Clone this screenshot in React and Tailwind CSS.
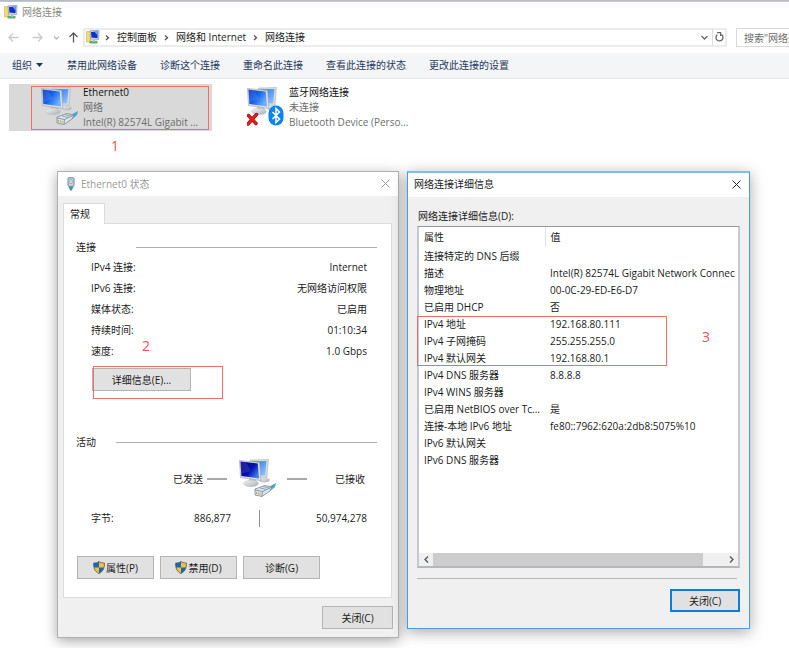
import React from "react";

function Monitors({ dark }) {
  const front = dark ? "url(#screenDark)" : "url(#screenBlue)";
  return (
    <g>
      <defs>
        <linearGradient id="screenBlue" x1="0" y1="0" x2="1" y2="0.6">
          <stop offset="0" stopColor="#0a35b4" />
          <stop offset="0.5" stopColor="#1560ee" />
          <stop offset="1" stopColor="#6fb0ff" />
        </linearGradient>
        <linearGradient id="screenDark" x1="0" y1="0" x2="1" y2="0.7">
          <stop offset="0" stopColor="#05057c" />
          <stop offset="0.6" stopColor="#0610b0" />
          <stop offset="1" stopColor="#3f7df0" />
        </linearGradient>
        <linearGradient id="screenBack" x1="0" y1="0" x2="1" y2="1">
          <stop offset="0" stopColor="#1c6be8" />
          <stop offset="1" stopColor="#9bcaff" />
        </linearGradient>
        <linearGradient id="stand" x1="0" y1="0" x2="1" y2="1">
          <stop offset="0" stopColor="#f4f4f4" />
          <stop offset="1" stopColor="#a9adb2" />
        </linearGradient>
      </defs>
      <ellipse cx="25" cy="21" rx="6" ry="2.5" fill="url(#stand)" />
      <path d="M11 1 L29.500 0.500 L28 18.500 L15 18 Z" fill="#d7dbe0" stroke="#a4aab2" strokeWidth="0.500" />
      <path d="M13 2.500 L27.500 2 L26.200 16.500 L15 16 Z" fill="url(#screenBack)" />
      <path d="M10 18 L17 19 L18 24 L10 24 Z" fill="#c2c6ca" />
      <ellipse cx="12" cy="24.500" rx="7.500" ry="3.200" fill="url(#stand)" stroke="#b4b8bc" strokeWidth="0.400" />
      <path d="M0.500 1.500 L20.500 3.500 L22 21.500 L1.500 18.500 Z" fill="#dfe3e7" stroke="#9aa1aa" strokeWidth="0.600" />
      <path d="M1.500 2.600 L18.800 4.400 L20 19.500 L2.400 17 Z" fill={front} />
      <path d="M1.500 2.600 L7 3.200 L12 12 L2.300 15 Z" fill="#fff" opacity="0.100" />
    </g>
  );
}

function Plug() {
  return (
    <g>
      <path d="M28 29 L37 24 L36 28 L31 32 Z" fill="#48a5d0" />
      <path d="M16 30 L26 26.500 L33 28 L31 32 L23 37.500 L16 36 Z" fill="#dce5eb" stroke="#71899b" strokeWidth="0.800" />
      <path d="M16 31 L23.500 32.500 L33 28 M23.500 32.500 L23 37" fill="none" stroke="#71899b" strokeWidth="0.800" />
      <path d="M21 29 L28 30.500 M24 27.600 L31 29.200" stroke="#8fa6b6" strokeWidth="1" />
      <path d="M17.500 33 v2 M19.300 33.400 v2 M21.100 33.800 v2" stroke="#c79d36" strokeWidth="0.900" />
    </g>
  );
}

function EthernetIcon({ dark }) {
  return (
    <svg className="h-10 w-[38px] shrink-0" viewBox="0 0 38 40" aria-hidden="true">
      <Monitors dark={dark} />
      <Plug />
    </svg>
  );
}

function BluetoothIcon() {
  return (
    <svg className="h-10 w-[38px] shrink-0" viewBox="0 0 38 40" aria-hidden="true">
      <Monitors />
      <path d="M1.500 28.500 L9 36.500 M9.500 27.500 L1 37" stroke="#8e0b0b" strokeWidth="3.400" strokeLinecap="round" />
      <path d="M1.500 28.500 L9 36.500 M9.500 27.500 L1 37" stroke="#e61e1e" strokeWidth="2.300" strokeLinecap="round" />
      <rect x="21.500" y="18.500" width="15" height="20" rx="7.500" fill="#0a84f5" />
      <path d="M25.500 25 L32.500 32 L29 35.500 V21.500 L32.500 25 L25.500 32" fill="none" stroke="#fff" strokeWidth="1.500" />
    </svg>
  );
}

function FolderIcon() {
  return (
    <svg className="h-[14px] w-[14px] shrink-0" viewBox="0 0 14 14" aria-hidden="true">
      <path d="M0.500 1.500 H5 V12 H0.500 Z" fill="#f2dc6e" stroke="#cdb548" strokeWidth="0.600" />
      <path d="M4 0.800 L13 0.400 L12.600 9.500 L4.500 9 Z" fill="#d3dfec" stroke="#7f93aa" strokeWidth="0.700" />
      <path d="M5 2 L11.800 1.600 L11.500 8.200 L5.400 7.600 Z" fill="#1330c4" />
      <path d="M8.500 1.800 L11.800 1.600 L11.600 5.500 Z" fill="#6aa8f4" />
      <path d="M3.500 10.800 H11.500 V13.500 H3.500 Z" fill="#5fae70" />
      <path d="M7 9.500 H9 V12 H7 Z" fill="#a9bccb" />
    </svg>
  );
}

function AdapterIcon() {
  return (
    <svg className="h-[14px] w-[8px] shrink-0" viewBox="0 0 8 14" aria-hidden="true">
      <rect x="1" y="0.700" width="6" height="8.600" rx="0.800" fill="#c9d5df" stroke="#71869a" />
      <path d="M3 2.500 h2 v4 h-2 z" fill="#f5f8fa" stroke="#8497a8" strokeWidth="0.700" />
      <path d="M1.800 9.500 H6.200 V11 L5.200 12 V13.500 H2.800 V12 L1.800 11 Z" fill="#3b93bd" />
    </svg>
  );
}

function Shield() {
  return (
    <svg className="h-[13px] w-3 shrink-0" viewBox="0 0 12 13" aria-hidden="true">
      <path d="M6 0.500 C4.500 1.700 2.500 2 0.600 2 C0.500 7.500 2 10.500 6 12.500 C10 10.500 11.500 7.500 11.400 2 C9.500 2 7.500 1.700 6 0.500 Z" fill="#1568c0" />
      <path d="M6 0.500 C7.500 1.700 9.500 2 11.400 2 C11.450 3.800 11.300 5.200 11 6.400 H6 Z" fill="#fbc02e" />
      <path d="M6 6.400 H1 C1.600 9.300 3.200 11.200 6 12.500 Z" fill="#fbc02e" />
      <path d="M6 0.500 C4.500 1.700 2.500 2 0.600 2 C0.500 7.500 2 10.500 6 12.500 C10 10.500 11.500 7.500 11.400 2 C9.500 2 7.500 1.700 6 0.500 Z" fill="none" stroke="#4c5560" strokeWidth="0.700" />
    </svg>
  );
}

function Cross() {
  return (
    <svg className="h-[9px] w-[9px]" viewBox="0 0 9 9" aria-hidden="true">
      <path d="M0.500 0.500 L8.500 8.500 M8.500 0.500 L0.500 8.500" stroke="currentColor" strokeWidth="1" fill="none" />
    </svg>
  );
}

function Chevron({ d = "M2 1.500 L4.500 3.700 L2 6", className = "text-[#555]" }) {
  return (
    <svg className={`h-[7px] w-[7px] shrink-0 ${className}`} viewBox="0 0 7 7" aria-hidden="true">
      <path d={d} stroke="currentColor" strokeWidth="1.300" fill="none" />
    </svg>
  );
}

function Arrow({ d, className }) {
  return (
    <svg className={`h-[11px] w-[11px] ${className}`} viewBox="0 0 11 11" aria-hidden="true">
      <path d={d} stroke="currentColor" fill="none" strokeWidth="1.300" />
    </svg>
  );
}

const buttonBase = "flex items-center justify-center bg-[#e1e1e1]";
const pushButton = `${buttonBase} h-[23px] border border-[#b4b4b4]`;

function AddressBar() {
  return (
    <div className="flex h-[31px] items-center text-[#1a1a1a]">
      <nav className="flex w-[83px] shrink-0 items-center pl-2" aria-label="导航">
        <button aria-label="后退"><Arrow className="text-[#cacaca]" d="M10.500 5.500 H1 M5 1.500 L1 5.500 L5 9.500" /></button>
        <button className="ml-[13px]" aria-label="前进"><Arrow className="text-[#cacaca]" d="M0.500 5.500 H10 M6 1.500 L10 5.500 L6 9.500" /></button>
        <button className="ml-[10px]" aria-label="最近"><Chevron className="text-[#b8b8b8]" d="M1 2.500 L3.500 5 L6 2.500" /></button>
        <button className="ml-2" aria-label="向上"><Arrow className="text-[#5a5a5a]" d="M5.500 10.500 V1 M1.500 5 L5.500 1 L9.500 5" /></button>
      </nav>
      <div className="flex h-[19px] min-w-0 flex-1 items-center border-2 border-[#ececec] pb-px pl-px">
        <FolderIcon />
        <span className="ml-1 flex"><Chevron /></span>
        <a href="#panel" className="ml-[6px]">控制面板</a>
        <span className="mx-[6px] flex"><Chevron /></span>
        <a href="#network">网络和 Internet</a>
        <span className="mx-[6px] flex"><Chevron /></span>
        <a href="#connections">网络连接</a>
        <button className="ml-auto flex w-4 justify-center" aria-label="展开"><Chevron className="text-[#666]" d="M0.500 2 L3.500 5 L6.500 2" /></button>
        <button className="flex h-4 w-[13px] items-center justify-center border-l border-[#dcdcdc]" aria-label="刷新">
          <svg className="h-[10px] w-[9px]" viewBox="0 0 9 10" aria-hidden="true">
            <path d="M6.500 2.600 A3.500 3.500 0 1 1 2.300 2.700 M2 0.700 H5.600 V4" fill="none" stroke="#666" strokeWidth="1.300" />
          </svg>
        </button>
      </div>
      <input
        type="text"
        aria-label="搜索"
        placeholder={'搜索"网络连接"'}
        className="ml-[9px] h-[19px] w-[53px] shrink-0 border border-r-0 border-[#d9d9d9] pl-[7px] outline-none placeholder:text-[#6d6d6d]"
      />
    </div>
  );
}

function Toolbar() {
  const actions = ["禁用此网络设备", "诊断这个连接", "重命名此连接", "查看此连接的状态", "更改此连接的设置"];
  return (
    <div className="flex h-[26px] items-center border-b border-[#e3e6ea] bg-[#f4f5f7] pb-px pl-3 text-[#1e395b]">
      <button className="mr-6 flex items-center gap-1">
        组织
        <svg className="h-1 w-[7px]" viewBox="0 0 7 4" aria-hidden="true"><path d="M0 0 H7 L3.500 4 Z" fill="currentColor" /></svg>
      </button>
      <div className="flex gap-[23px]">
        {actions.map((a) => <button key={a}>{a}</button>)}
      </div>
    </div>
  );
}

function Adapter({ icon, name, state, device }) {
  return (
    <div className="flex gap-1 pl-8 leading-[15px] text-[#6d6d6d]">
      <div className="pt-[3px]">{icon}</div>
      <div className="pt-px whitespace-nowrap">
        <div className="text-[#111]">{name}</div>
        <div>{state}</div>
        <div>{device}</div>
      </div>
    </div>
  );
}

function SectionTitle({ children, lineClass }) {
  return (
    <div className="flex items-center">
      <h2>{children}</h2>
      <div className={`h-px flex-1 bg-[#adadad] ${lineClass}`} />
    </div>
  );
}

function StatusWindow() {
  const rows = [
    ["IPv4 连接:", "Internet"],
    ["IPv6 连接:", "无网络访问权限"],
    ["媒体状态:", "已启用"],
    ["持续时间:", "01:10:34"],
    ["速度:", "1.0 Gbps"],
  ];
  return (
    <section className="w-[342px] shrink-0 border border-[#b0b0b0] bg-[#f0f0f0] shadow-[0_3px_12px_rgba(0,0,0,0.35)]">
      <header className="flex h-6 items-center bg-white pr-2 pb-px pl-[9px] text-[#9a9a9a]">
        <AdapterIcon />
        <h1 className="ml-[6px]">Ethernet0 状态</h1>
        <button className="ml-auto" aria-label="关闭窗口"><Cross /></button>
      </header>
      <div className="pt-[7px] pr-[5px] pb-2 pl-[5px]">
        <div role="tablist">
          <button role="tab" aria-selected="true" className="relative z-10 -mb-px block h-[21px] w-[42px] border border-b-0 border-[#dcdcdc] bg-white pr-2 pb-px text-center">常规</button>
        </div>
        <div className="mr-px border border-[#dcdcdc] bg-white pt-4 pr-[14px] pb-[18px] pl-3">
          <SectionTitle lineClass="ml-10">连接</SectionTitle>
          <dl className="mt-[2px] pr-[10px] pl-[15px]">
            {rows.map(([k, v]) => (
              <div key={k} className="flex h-[21px] items-center justify-between">
                <dt>{k}</dt>
                <dd>{v}</dd>
              </div>
            ))}
          </dl>
          <div className="relative mt-[7px] ml-4">
            <button className={`${pushButton} w-[99px]`}>详细信息(E)...</button>
            <div className="pointer-events-none absolute -top-[2px] left-px h-[33px] w-[130px] border border-[#f56c6c]" />
            <span className="absolute -top-[30px] left-[50px] text-[14px] leading-4 text-[#f55050]">2</span>
          </div>
          <div className="mt-11">
            <SectionTitle lineClass="ml-5">活动</SectionTitle>
          </div>
          <div className="mt-[10px] flex h-10 items-center pr-3 pl-[97px]">
            <span>已发送</span>
            <span className="mr-3 ml-1 h-[2px] w-5 bg-[#a8a8a8]" />
            <EthernetIcon dark />
            <span className="ml-[10px] h-[2px] w-5 bg-[#a8a8a8]" />
            <span className="ml-auto">已接收</span>
          </div>
          <div className="mt-[10px] flex h-[18px] items-center pr-[10px] pl-[15px]">
            <span>字节:</span>
            <span className="ml-auto">886,877</span>
            <span className="ml-7 h-[17px] w-px bg-[#8f8f8f]" />
            <span className="w-[107px] text-right">50,974,278</span>
          </div>
          <div className="mt-[29px] ml-px flex gap-[6px]">
            <button className={`${pushButton} w-[77px] gap-px`}><Shield />属性(P)</button>
            <button className={`${pushButton} w-[77px] gap-px`}><Shield />禁用(D)</button>
            <button className={`${pushButton} w-[77px]`}>诊断(G)</button>
          </div>
        </div>
        <button className={`${pushButton} mt-2 ml-auto w-[71px]`}>关闭(C)</button>
      </div>
    </section>
  );
}

function DetailsWindow() {
  const rows = [
    ["连接特定的 DNS 后缀", ""],
    ["描述", "Intel(R) 82574L Gigabit Network Connec"],
    ["物理地址", "00-0C-29-ED-E6-D7"],
    ["已启用 DHCP", "否"],
    ["IPv4 地址", "192.168.80.111"],
    ["IPv4 子网掩码", "255.255.255.0"],
    ["IPv4 默认网关", "192.168.80.1"],
    ["IPv4 DNS 服务器", "8.8.8.8"],
    ["IPv4 WINS 服务器", ""],
    ["已启用 NetBIOS over Tc...", "是"],
    ["连接-本地 IPv6 地址", "fe80::7962:620a:2db8:5075%10"],
    ["IPv6 默认网关", ""],
    ["IPv6 DNS 服务器", ""],
  ];
  return (
    <section className="min-w-0 flex-1 border border-t-2 border-[#4a9be0] border-t-[#7fbdec] bg-[#f0f0f0] shadow-[0_3px_14px_rgba(0,0,0,0.35)]">
      <header className="flex h-6 items-center bg-white pr-2 pb-[2px] pl-[6px]">
        <h1>网络连接详细信息</h1>
        <button className="ml-auto text-[#222]" aria-label="关闭窗口"><Cross /></button>
      </header>
      <div className="px-[9px] pt-3 pb-4">
        <h2 id="details-label" className="pl-px">网络连接详细信息(D):</h2>
        <div className="relative mt-[3px] border-2 border-t border-[#c6c8cf] border-t-[#9296a0] border-b-[#b5b7bd] bg-white">
          <div className="h-[326px] overflow-hidden">
            <table className="w-full table-fixed border-collapse whitespace-nowrap" aria-labelledby="details-label">
              <thead>
                <tr className="h-5 text-left">
                  <th className="w-[126px] border-r border-[#e0e0e0] p-0 pl-[5px] font-normal">属性</th>
                  <th className="p-0 pl-[5px] font-normal">值</th>
                </tr>
              </thead>
              <tbody>
                {rows.map(([k, v]) => (
                  <tr key={k} className="h-[17px]">
                    <td className="p-0 pl-[5px]">{k}</td>
                    <td className="p-0 pl-[5px]">{v}</td>
                  </tr>
                ))}
              </tbody>
            </table>
          </div>
          <div className="flex h-[13px] items-center bg-[#f0f0f0]">
            <button className="flex w-[14px] justify-center" aria-label="向左滚动"><Chevron d="M5 0.500 L2 3.500 L5 6.500" /></button>
            <div className="h-full w-[270px] bg-[#cdcdcd]" />
            <button className="ml-auto flex w-[14px] justify-center" aria-label="向右滚动"><Chevron d="M2 0.500 L5 3.500 L2 6.500" /></button>
          </div>
          <div className="pointer-events-none absolute top-[89px] -left-[2px] h-[50px] w-[250px] border border-[#f56c6c]" />
          <span className="absolute top-[102px] left-[283px] text-[14px] leading-4 text-[#f55050]">3</span>
        </div>
        <div className="mt-[10px] mr-[3px] h-px bg-[#b8b8b8]" />
        <button className={`${buttonBase} mt-[10px] ml-auto h-[23px] w-[70px] border-2 border-[#0f7cd6]`}>关闭(C)</button>
      </div>
    </section>
  );
}

export default function App() {
  return (
    <div className="h-screen overflow-hidden bg-white font-['Open_Sans','Noto_Sans_CJK_SC',sans-serif] text-[10px] leading-[14px] text-[#1a1a1a]">
      <div className="h-[2px] border-b border-[#b9c8dc] bg-[#bcb9bf]" />
      <header className="flex h-5 items-center gap-1 pl-1 text-[#8a8a8a]">
        <FolderIcon />
        <span>网络连接</span>
      </header>
      <AddressBar />
      <Toolbar />
      <main>
        <div className="flex gap-[3px] pt-[5px] pl-[9px]">
          <div className="relative h-[47px] w-[203px] bg-[#d9d9d9]">
            <Adapter icon={<EthernetIcon />} name="Ethernet0" state="网络" device="Intel(R) 82574L Gigabit ..." />
            <div className="pointer-events-none absolute top-[2px] left-[22px] h-[44px] w-[178px] border border-[#f56c6c]" />
            <span className="absolute top-[54px] left-[102px] text-[14px] leading-4 text-[#f55050]">1</span>
          </div>
          <Adapter icon={<BluetoothIcon />} name="蓝牙网络连接" state="未连接" device="Bluetooth Device (Perso..." />
        </div>
        <div className="mt-10 flex items-start gap-2 pr-[39px] pl-[57px]">
          <StatusWindow />
          <DetailsWindow />
        </div>
      </main>
    </div>
  );
}
